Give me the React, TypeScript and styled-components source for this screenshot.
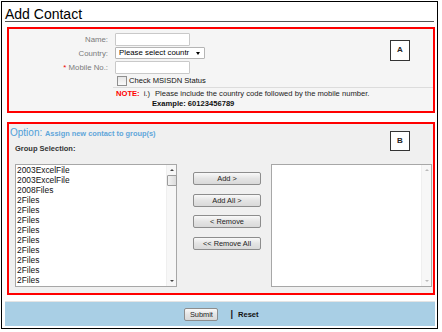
import React from "react";
import styled, { createGlobalStyle } from "styled-components";

const GlobalStyle = createGlobalStyle`
  html, body { margin: 0; padding: 0; background: #fff; }
  body { font-family: "Liberation Sans", Arial, sans-serif; }
  * { box-sizing: border-box; }
`;

const Frame = styled.div`
  margin: 1px 0 0 1px;
  width: 437px;
  height: 328px;
  border: 1px solid #000;
  display: flex;
  flex-direction: column;
`;

const Title = styled.h1`
  margin: 0 3px;
  padding-top: 5px;
  height: 20px;
  border-bottom: 1px solid #555;
  font-size: 14px;
  line-height: 14px;
  font-weight: normal;
  color: #000;
`;

const Section = styled.section<{ $tone: string; $gap: number; $h: number }>`
  position: relative;
  margin: ${(p) => p.$gap}px 2px 0 5px;
  height: ${(p) => p.$h}px;
  border: 2px solid #f00;
  background: ${(p) => p.$tone};
`;

const Badge = styled.div<{ $top: number; $h: number }>`
  position: absolute;
  top: ${(p) => p.$top}px;
  right: 23px;
  width: 20px;
  height: ${(p) => p.$h}px;
  border: 1px solid #333;
  background: #fff;
  font-size: 8px;
  font-weight: bold;
  color: #222;
  display: flex;
  align-items: center;
  justify-content: center;
  padding-bottom: 2px;
`;

const FormBody = styled.div`
  padding-top: 3px;
`;

const FieldRow = styled.div`
  display: flex;
  align-items: center;
  height: 14px;
`;

const Label = styled.label`
  width: 99px;
  margin-right: 7px;
  text-align: right;
  font-size: 7.8px;
  color: #7a7a7a;
  white-space: nowrap;
`;

const Star = styled.span`
  color: #e00;
`;

const TextInput = styled.div`
  width: 75px;
  height: 13px;
  border: 1px solid #c9c9c9;
  border-radius: 1px;
  background: #fff;
`;

const Select = styled.div`
  position: relative;
  width: 90px;
  height: 12px;
  border: 1px solid #b5b5b5;
  border-radius: 1px;
  background: #fff;
  font-size: 7.8px;
  line-height: 10px;
  color: #000;
  padding-left: 3px;
  white-space: nowrap;
  overflow: hidden;
`;

const Caret = styled.span`
  position: absolute;
  right: 4px;
  top: 4px;
  width: 0;
  height: 0;
  border-left: 2.5px solid transparent;
  border-right: 2.5px solid transparent;
  border-top: 3px solid #000;
`;

const CheckRow = styled.div`
  display: flex;
  align-items: center;
  height: 13px;
  padding-left: 108px;
  font-size: 7.6px;
  color: #111;
`;

const CheckBox = styled.span`
  width: 10px;
  height: 10px;
  border: 1px solid #8f8f8f;
  background: linear-gradient(#e6e6e6, #fafafa);
  margin-right: 2px;
`;

const Divider = styled.div`
  margin-left: 104px;
  border-top: 1px solid #dcdcdc;
`;

const Note = styled.div`
  margin-top: 1px;
  padding-left: 107px;
  font-size: 7.6px;
  line-height: 10px;
  color: #222;
`;

const NoteLine = styled.div`
  display: flex;
  white-space: nowrap;
`;

const NoteTag = styled.span`
  color: #f00;
  font-weight: bold;
  margin-right: 4px;
`;

const NoteIndex = styled.span`
  margin-right: 5px;
`;

const Example = styled.div`
  margin-left: 36px;
  font-weight: bold;
  color: #111;
`;

const OptionRow = styled.div`
  margin: 1px 0 0 1px;
  height: 12px;
  line-height: 12px;
  white-space: nowrap;
  color: #4f9fd9;
`;

const OptionTitle = styled.span`
  font-size: 10px;
`;

const OptionSub = styled.span`
  font-size: 7.4px;
  font-weight: bold;
  color: #5fa6da;
`;

const GroupLabel = styled.div`
  margin: 7px 0 0 6px;
  height: 10px;
  line-height: 10px;
  font-size: 7.5px;
  font-weight: bold;
  color: #333;
`;

const ListsRow = styled.div`
  display: flex;
  align-items: flex-start;
  margin-top: 10px;
  padding-left: 6px;
`;

const ListBox = styled.div<{ $w: number; $ml: number }>`
  display: flex;
  width: ${(p) => p.$w}px;
  height: 123px;
  margin-left: ${(p) => p.$ml}px;
  border: 1px solid #a7a7a7;
  background: #fff;
`;

const Items = styled.div`
  flex: 1;
  overflow: hidden;
  padding-left: 1px;
`;

const Item = styled.div`
  height: 10px;
  line-height: 10px;
  font-size: 8.4px;
  color: #111;
  white-space: nowrap;
`;

const ScrollBar = styled.div`
  width: 10px;
  display: flex;
  flex-direction: column;
  align-items: center;
  background: #f7f7f7;
  border-left: 1px solid #efefef;
`;

const Arrow = styled.span<{ $up?: boolean; $off?: boolean }>`
  width: 0;
  height: 0;
  margin: 4px 0;
  border-left: 2px solid transparent;
  border-right: 2px solid transparent;
  ${(p) =>
    p.$up
      ? `border-bottom: 2px solid ${p.$off ? "#bbb" : "#444"};`
      : `border-top: 2px solid ${p.$off ? "#bbb" : "#444"};`}
`;

const Thumb = styled.div`
  width: 10px;
  height: 11px;
  border: 1px solid #9c9c9c;
  border-radius: 1px;
  background: linear-gradient(90deg, #f2f2f2, #dcdcdc);
`;

const Spacer = styled.div`
  flex: 1;
`;

const ButtonCol = styled.div`
  display: flex;
  flex-direction: column;
  gap: 8.5px;
  width: 68px;
  margin-left: 16px;
  padding-top: 8px;
`;

const Button = styled.button<{ $w?: number }>`
  width: ${(p) => (p.$w ? `${p.$w}px` : "100%")};
  height: 13px;
  padding: 0;
  border: 1px solid #8d8d8d;
  border-radius: 2px;
  background: linear-gradient(#f9f9f9, #e4e4e4 50%, #d9d9d9);
  font-family: "Liberation Sans", Arial, sans-serif;
  font-size: 7.4px;
  line-height: 11px;
  color: #222;
`;

const Footer = styled.footer`
  margin: 6px 2px 0 3px;
  height: 25px;
  border-top: 1px solid #e4e4e4;
  background: #a9cfe5;
  display: flex;
  align-items: center;
  justify-content: center;
  padding-left: 3px;
`;

const Pipe = styled.span`
  margin: 0 5px 0 12px;
  font-size: 9px;
  font-weight: bold;
  color: #111;
`;

const ResetLink = styled.span`
  font-size: 7.6px;
  font-weight: bold;
  color: #111;
`;

const groups = [
  "2003ExcelFile",
  "2003ExcelFile",
  "2008Files",
  "2Files",
  "2Files",
  "2Files",
  "2Files",
  "2Files",
  "2Files",
  "2Files",
  "2Files",
  "2Files",
];

export default function App() {
  return (
    <>
      <GlobalStyle />
      <Frame>
        <Title>Add Contact</Title>

        <Section $tone="#f5f5f5" $gap={5} $h={86}>
          <Badge $top={11} $h={21}>A</Badge>
          <FormBody>
            <FieldRow>
              <Label>Name:</Label>
              <TextInput />
            </FieldRow>
            <FieldRow>
              <Label>Country:</Label>
              <Select>
                Please select countr
                <Caret />
              </Select>
            </FieldRow>
            <FieldRow>
              <Label>
                <Star>*</Star> Mobile No.:
              </Label>
              <TextInput />
            </FieldRow>
            <CheckRow>
              <CheckBox />
              Check MSISDN Status
            </CheckRow>
            <Divider />
            <Note>
              <NoteLine>
                <NoteTag>NOTE:</NoteTag>
                <NoteIndex>i.)</NoteIndex>
                Please include the country code followed by the mobile number.
              </NoteLine>
              <Example>Example: 60123456789</Example>
            </Note>
          </FormBody>
        </Section>

        <Section $tone="#f0f0f0" $gap={9} $h={173}>
          <Badge $top={7} $h={20}>B</Badge>
          <OptionRow>
            <OptionTitle>Option: </OptionTitle>
            <OptionSub>Assign new contact to group(s)</OptionSub>
          </OptionRow>
          <GroupLabel>Group Selection:</GroupLabel>
          <ListsRow>
            <ListBox $w={162} $ml={0}>
              <Items>
                {groups.map((g, i) => (
                  <Item key={i}>{g}</Item>
                ))}
              </Items>
              <ScrollBar>
                <Arrow $up />
                <Thumb />
                <Spacer />
                <Arrow />
              </ScrollBar>
            </ListBox>
            <ButtonCol>
              <Button>Add &gt;</Button>
              <Button>Add All &gt;</Button>
              <Button>&lt; Remove</Button>
              <Button>&lt;&lt; Remove All</Button>
            </ButtonCol>
            <ListBox $w={161} $ml={10}>
              <Items />
              <ScrollBar>
                <Arrow $up $off />
                <Spacer />
                <Arrow $off />
              </ScrollBar>
            </ListBox>
          </ListsRow>
        </Section>

        <Footer>
          <Button $w={34}>Submit</Button>
          <Pipe>|</Pipe>
          <ResetLink>Reset</ResetLink>
        </Footer>
      </Frame>
    </>
  );
}
